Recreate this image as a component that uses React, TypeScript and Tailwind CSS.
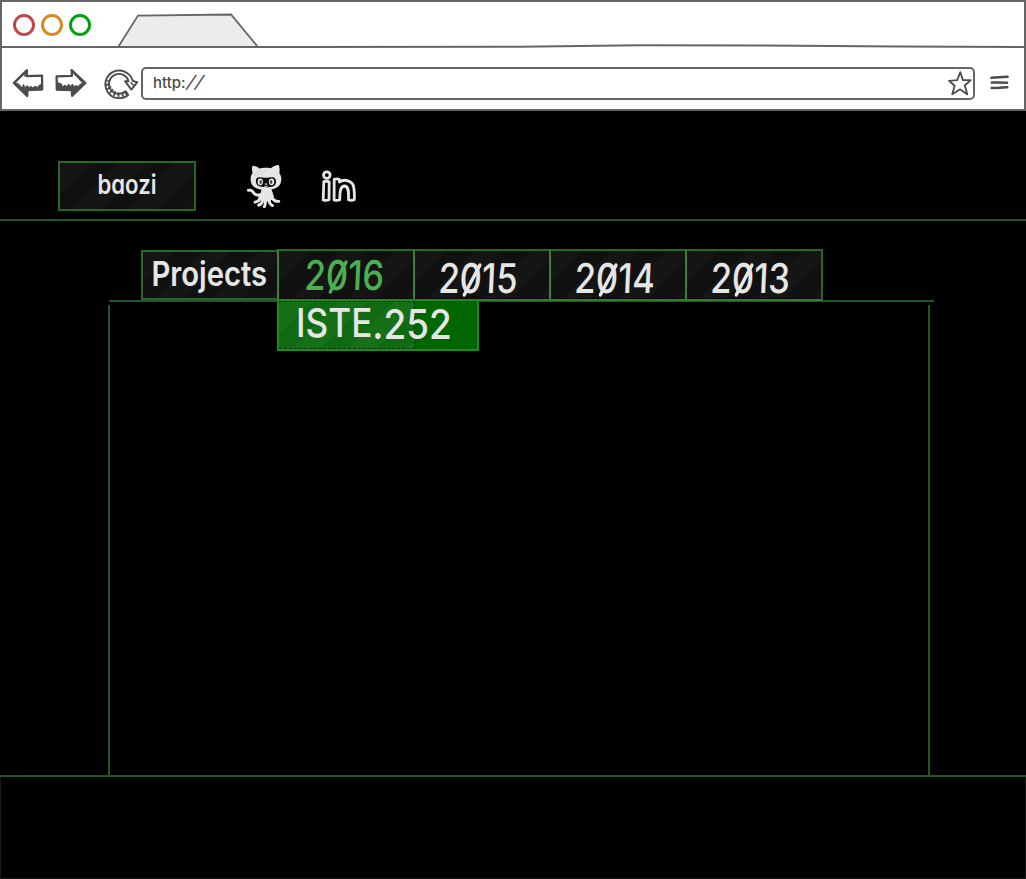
import React from "react";

const stripes =
  "bg-[repeating-linear-gradient(135deg,#101010_0px,#101010_2px,#151515_2px,#151515_22px,#101010_22px,#101010_40px)]";

const lettering = "font-['Inter','Noto_Sans',sans-serif] whitespace-nowrap leading-none [font-feature-settings:'cv11']";

function TrafficLights() {
  return (
    <div className="flex gap-[6px] pl-[11px] pt-3">
      <span className="size-[22px] rounded-full border-[3px] border-[#bc4848]" />
      <span className="size-[22px] rounded-full border-[3px] border-[#db8a22]" />
      <span className="size-[22px] rounded-full border-[3px] border-[#00a010]" />
    </div>
  );
}

function BackArrow() {
  return (
    <svg width="32" height="30" viewBox="0 0 32 30" fill="none" stroke="#4c4c4c" strokeLinejoin="round" strokeLinecap="round">
      <path d="M1.8 15 15 2.2 14.6 8.2 30 7.6 30.2 21.4 15.4 22 15.2 28 Z" strokeWidth="2.3" />
      <path d="M2 15 6 15.5 8 17.5 10 20 11.5 16.5 13 20 15 17.5 17 19.5 19 18.5 21 20 23 18 25 19.5 27 17.5 30 16V22L15 22V28Z" fill="#4c4c4c" strokeWidth="1" />
      <path d="M3.5 14 13 4.6V8M5 16.5 9 20" strokeWidth="1.6" />
    </svg>
  );
}

function ForwardArrow() {
  return (
    <svg width="32" height="30" viewBox="0 0 32 30" fill="none" stroke="#4c4c4c" strokeLinejoin="round" strokeLinecap="round">
      <path d="M1.6 8.4 17 7.8 16.6 2.2 30.4 15 17 27.8V22L1.8 21.6Z" strokeWidth="2.3" />
      <path d="M2 13 4 17 6 15.5 8 19 10 17 12 19 13.5 16 15.5 18.5 17.5 16 19 19 21 17.5 23 18.5 26 15.5 30 15 17 28V22H2Z" fill="#4c4c4c" strokeWidth="1" />
      <path d="M19 5.2 27.5 14.2M2.2 15.5H4.5" strokeWidth="1.6" />
    </svg>
  );
}

function ReloadIcon() {
  return (
    <svg width="36" height="32" viewBox="0 0 36 32" fill="none" stroke="#4c4c4c" strokeLinejoin="round" strokeLinecap="round">
      <path d="M29.6 13.5A13.9 13.9 0 1 0 25.2 28L22.8 24.2A10 10 0 1 1 25.6 14.2H22L28.4 22.6 34.2 15.2 29.8 14Z" strokeWidth="1.9" />
      <path d="M4.5 11A12 12 0 0 1 24 7" strokeWidth="0.8" />
      <path d="M3.2 18 6 17.2M4.5 22 7.5 20M7.3 25.5 9.5 22.8M11 28 12.2 25M15.5 29.4V26M20 29 19 25.8M24 27.5 21.5 24.8" strokeWidth="1.9" />
      <path d="M3.5 13.6 6.5 14.2M28 15.5 30.4 18.5" strokeWidth="1.3" />
    </svg>
  );
}

function StarIcon() {
  return (
    <svg width="24" height="25" viewBox="0 0 24 25" fill="none" stroke="#4c4c4c" strokeWidth="1.8" strokeLinejoin="round">
      <path d="M12.3 1.2 14.8 9 22.7 9.1 16.7 14.5 19.4 23.4 12 18.3 4.2 23.3 6.7 14.8 1 9.8 9.2 9.1Z" />
    </svg>
  );
}

function MenuIcon() {
  return (
    <svg width="19" height="15" viewBox="0 0 19 15" stroke="#4c4c4c" strokeWidth="2.5" strokeLinecap="round" fill="none">
      <path d="M1.5 2.8 9 2.3 17.6 1.8M1.8 7.6 9 7.4 17 7.7M1.7 12.9 9 12.7 17.3 12.2" />
    </svg>
  );
}

function Octocat() {
  return (
    <svg width="38" height="45" viewBox="0 0 38 45" fill="#e6e6e6">
      <g transform="translate(1 0)">
        <path d="M5.6 1.8C6.6 1.2 10.5 3.2 12.5 4.4 15.5 3.6 20.5 3.5 23.8 4.2 26 2.3 30.4 .4 31.6 1.1 32.8 3 32.8 7 32.3 9 34.6 12 34.9 16.4 33.4 19.8 31.2 24.2 26 25.8 19.3 25.8 12.2 25.8 6.6 24.2 4.6 20 3 16.2 3.4 12 5.6 8.8 4.8 5.8 4.8 3.2 5.6 1.8Z" />
        <path d="M10 13.8C12 12.4 15 13.8 19 13.8 23 13.8 26.2 12.4 28 14.4 29.8 16.5 29.3 20.4 27 21.9 24 23.6 14 23.6 11.2 21.8 8.6 20 8.2 15.8 10 13.8Z" fill="#0c0c0c" />
        <ellipse cx="13.3" cy="17.8" rx="2.7" ry="3.4" />
        <ellipse cx="24.6" cy="17.8" rx="2.7" ry="3.4" />
        <ellipse cx="13.7" cy="18" rx="1.2" ry="2" fill="#444" />
        <ellipse cx="24.2" cy="18" rx="1.2" ry="2" fill="#444" />
        <path d="M18.2 19.8H20L19.1 20.9ZM17 21.9Q19 23.4 21 21.9" stroke="#e6e6e6" strokeWidth=".6" />
        <path d="M14.5 24H24C25.2 27.5 26.2 30 27 33L23 37.5H15L11 33.5C13.4 30.5 14.4 28 14.5 24Z" />
        <path d="M14 30.4C10 32 7.8 30.8 6.4 28.4 5.4 26.6 3.8 25.8 1.4 26.2M13.5 33C13 36.8 11 37.6 8 38.2M16 35C15.6 38.8 14.6 40.4 11.6 41.2M18.4 35C18.8 38.6 18.6 40 17.4 42.6M22 35C22 38.6 23 40.4 25.4 41.6M24.6 33C26.5 36.8 28.6 37.6 31.8 37.4" fill="none" stroke="#e6e6e6" strokeWidth="2.9" strokeLinecap="round" />
        <path d="M9 8.3h1M12 7.2h1M10.8 10.4h1M14.5 9h1M17 7.1h1M7.2 11h1" stroke="#a5a5a5" strokeWidth=".8" />
      </g>
    </svg>
  );
}

function LinkedInLogo() {
  return (
    <svg width="36" height="34" viewBox="0 0 36 34" fill="#000" stroke="#e6e6e6" strokeWidth="2.8" strokeLinejoin="round">
      <circle cx="5.8" cy="5.1" r="3.3" />
      <path d="M2.8 11.7Q5.8 10.8 8.2 11.7L8 29.8Q5.2 31 2.2 30Z" />
      <path d="M13.2 9.4Q16 8.3 18.4 9.4V12.1C23 8.4 32 10.8 32.8 17.5Q33.6 23 33.4 29.6Q30.4 31 27.5 29.7C27.8 22 27.8 16.6 23.8 16 19.4 15.8 18.8 21 18.8 29.8Q16 31 13.1 30Z" />
    </svg>
  );
}

function BrowserChrome() {
  return (
    <header className="h-[111px] border-2 border-[#666] bg-white">
      <div className="flex h-[46px]">
        <TrafficLights />
        <svg className="-ml-[89px] shrink-0" width="1022" height="46" viewBox="2 2 1022 46" fill="none" stroke="#666">
          <path d="M118.5 46.5 138 15.6 231 14.5 257.5 46.5" fill="#ececec" strokeWidth="1.8" />
          <path d="M2 47 300 47 520 46.8 640 45.2 760 45.5 900 46.5 1024 47" strokeWidth="2" />
        </svg>
      </div>
      <div className="flex h-[61px] items-start">
        <div className="flex pl-[10px] pt-5">
          <BackArrow />
          <div className="ml-[11px]"><ForwardArrow /></div>
          <div className="-mt-[1px] ml-[16px]"><ReloadIcon /></div>
        </div>
        <div className="ml-[2px] mt-[19px] flex h-[33px] w-[834px] items-center justify-between rounded-[5px] border-2 border-[#666] pl-[10px] pr-[1px]">
          <span className="pb-[3px] font-['Inter','Noto_Sans',sans-serif] text-[15px] font-medium leading-none text-[#4c4c4c]">
            http:<span className="inline-block -skew-x-[22deg] pl-[2px] text-[17px] tracking-[2px]">//</span>
          </span>
          <StarIcon />
        </div>
        <div className="ml-[15px] mt-[27px]"><MenuIcon /></div>
      </div>
    </header>
  );
}

/* Digits are hand-lettered: every zero carries a long diagonal stroke. */
function Year({ value }: { value: string }) {
  return (
    <>
      {value.split("").map((digit, i) => (
        <span key={i} className="relative inline-block">
          {digit}
          {digit === "0" && (
            <span className="absolute left-[13px] top-[3px] h-[38px] w-[4px] rotate-[30deg] rounded-full bg-current" />
          )}
        </span>
      ))}
    </>
  );
}

function YearTab({ year, active }: { year: string; active?: boolean }) {
  return (
    <div className={`relative -ml-[2px] flex h-[52px] w-[138px] shrink-0 justify-center border-2 border-[#2a662b] border-b-[#2f7e32] border-l-[#35833a] ${stripes}`}>
      <span className={`${lettering} inline-block origin-center scale-x-[0.84] -skew-x-3 text-[41px] font-medium ${active ? "-ml-[4px] mt-[4px] text-[#4caf50]" : "-ml-[7px] mt-[7px] text-[#e6e6e6]"}`}>
        <Year value={year} />
      </span>
      <span className="absolute inset-x-0 bottom-0 border-b border-dashed border-[#050505]" />
    </div>
  );
}

function CourseMenu() {
  return (
    <div className="absolute left-[277px] top-[188px] flex h-[52px] w-[202px] border-2 border-[#238526] bg-[#006600]">
      <div className="h-full w-[136px] border-y border-r border-dashed border-[#063c08] bg-[repeating-linear-gradient(135deg,#106a12_0px,#106a12_2px,#167018_2px,#167018_22px,#106a12_22px,#106a12_40px)]" />
      <div className={`${lettering} absolute left-[17px] top-0 flex origin-left scale-x-[0.9] font-medium text-[#e6e6e6]`}>
        <span className="mt-[2px] text-[39px]">ISTE</span>
        <span className="mt-[3px] text-[41px]">.252</span>
      </div>
    </div>
  );
}

export default function App() {
  return (
    <div className="flex h-[879px] w-[1026px] flex-col overflow-hidden bg-black">
      <BrowserChrome />
      <div className="relative flex flex-1 flex-col">
        <div className="flex h-[110px] items-start border-b-2 border-[#245526] pl-[58px] pt-[50px]">
          <div className={`flex h-[50px] w-[138px] justify-center border-2 border-[#2a662b] ${stripes}`}>
            <span className={`${lettering} mt-[8px] inline-block scale-x-[0.82] text-[27px] font-semibold text-[#e6e6e6]`}>baozi</span>
          </div>
          <div className="ml-[50px] mt-[3px]"><Octocat /></div>
          <div className="ml-[37px] mt-[9px]"><LinkedInLogo /></div>
        </div>
        <div className="flex h-[79px] items-end pl-[141px]">
          <div className={`flex h-[50px] w-[138px] shrink-0 justify-center border-2 border-[#2a662b] ${stripes}`}>
            <span className={`${lettering} -ml-[2px] mt-[5px] inline-block scale-x-[0.86] text-[34px] font-semibold text-[#e6e6e6]`}>Projects</span>
          </div>
          <div className="-mb-[1px] flex">
            <YearTab year="2016" active />
            <YearTab year="2015" />
            <YearTab year="2014" />
            <YearTab year="2013" />
          </div>
        </div>
        <div className="ml-[109px] h-[2px] w-[825px] bg-[#245526]" />
        <div className="ml-[108px] mt-[3px] h-[470px] w-[822px] border-x-2 border-[#245526]" />
        <div className="h-[2px] bg-[#245526]" />
        <div className="flex-1 border-x border-b border-[#1c1919]" />
        <CourseMenu />
      </div>
    </div>
  );
}
